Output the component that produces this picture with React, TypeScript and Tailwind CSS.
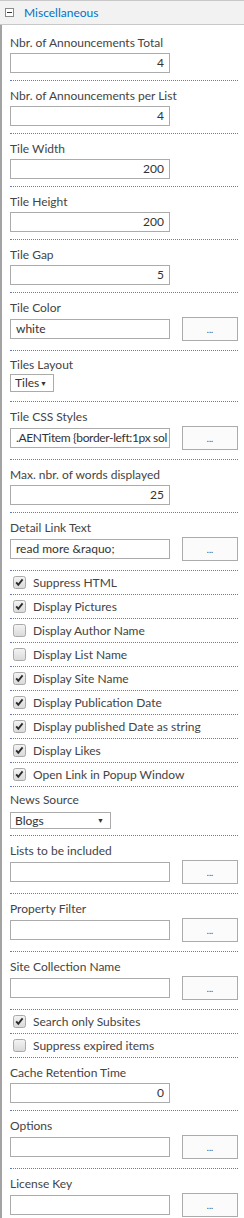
import React from 'react';

type Row =
  | { kind: 'text'; label: string; value?: string }
  | { kind: 'button'; label: string; value?: string; tight?: boolean }
  | { kind: 'select'; label: string; value: string; box: string; wrap: string }
  | { kind: 'check'; label: string; checked: boolean };

const ROWS: Row[] = [
  { kind: 'text', label: 'Nbr. of Announcements Total', value: '4' },
  { kind: 'text', label: 'Nbr. of Announcements per List', value: '4' },
  { kind: 'text', label: 'Tile Width', value: '200' },
  { kind: 'text', label: 'Tile Height', value: '200' },
  { kind: 'text', label: 'Tile Gap', value: '5' },
  { kind: 'button', label: 'Tile Color', value: 'white' },
  { kind: 'select', label: 'Tiles Layout', value: 'Tiles', box: 'mt-[2px] w-[44px] h-[18px]', wrap: 'pt-[6px] pb-[9px]' },
  { kind: 'button', label: 'Tile CSS Styles', value: '.AENTitem {border-left:1px sol', tight: true },
  { kind: 'text', label: 'Max. nbr. of words displayed', value: '25' },
  { kind: 'button', label: 'Detail Link Text', value: 'read more &raquo;' },
  { kind: 'check', label: 'Suppress HTML', checked: true },
  { kind: 'check', label: 'Display Pictures', checked: true },
  { kind: 'check', label: 'Display Author Name', checked: false },
  { kind: 'check', label: 'Display List Name', checked: false },
  { kind: 'check', label: 'Display Site Name', checked: true },
  { kind: 'check', label: 'Display Publication Date', checked: true },
  { kind: 'check', label: 'Display published Date as string', checked: true },
  { kind: 'check', label: 'Display Likes', checked: true },
  { kind: 'check', label: 'Open Link in Popup Window', checked: true },
  { kind: 'select', label: 'News Source', value: 'Blogs', box: 'mt-[5px] w-[101px] h-[17px]', wrap: 'pt-[5px] pb-[6px]' },
  { kind: 'button', label: 'Lists to be included' },
  { kind: 'button', label: 'Property Filter' },
  { kind: 'button', label: 'Site Collection Name' },
  { kind: 'check', label: 'Search only Subsites', checked: true },
  { kind: 'check', label: 'Suppress expired items', checked: false },
  { kind: 'text', label: 'Cache Retention Time', value: '0' },
  { kind: 'button', label: 'Options' },
  { kind: 'button', label: 'License Key' },
];

const Checkbox = ({ checked }: { checked: boolean }) => (
  <svg width="13" height="13" viewBox="0 0 13 13" className="shrink-0">
    <defs>
      <linearGradient id="cbg" x1="0" y1="0" x2="0" y2="1">
        <stop offset="0" stopColor="#f4f4f4" />
        <stop offset="1" stopColor="#d9d9d9" />
      </linearGradient>
    </defs>
    <rect x="0.5" y="0.5" width="12" height="12" rx="2" fill="url(#cbg)" stroke="#a9a9a9" />
    {checked && (
      <path d="M3.2 6.4 L5.3 8.8 L9.6 3.4" fill="none" stroke="#2b2b2b" strokeWidth="1.9" />
    )}
  </svg>
);

const Input = ({ value, right, tight }: { value?: string; right?: boolean; tight?: boolean }) => (
  <div
    className={`shrink-0 w-[160px] h-[20px] border border-[#ababab] bg-white px-[5px] flex items-center overflow-hidden whitespace-nowrap text-[#333] ${
      right ? 'justify-end' : 'justify-start'
    } ${tight ? 'tracking-[-0.35px]' : ''}`}
  >
    {value}
  </div>
);

const DotsButton = () => (
  <div className="shrink-0 ml-[12px] w-[56px] h-[24px] border border-[#ababab] bg-[#fbfbfb] flex items-end justify-center pb-[6px] text-[9px] leading-none text-[#444]">
    ...
  </div>
);

const FieldRow = ({ row }: { row: Row }) => {
  if (row.kind === 'check') {
    return (
      <div className="h-[23px] flex items-center pl-[3px] gap-[7px]">
        <Checkbox checked={row.checked} />
        <span>{row.label}</span>
      </div>
    );
  }
  if (row.kind === 'text') {
    return (
      <div className="pt-[7px] pb-[7px]">
        <div className="leading-[15px]">{row.label}</div>
        <div className="mt-[3px]">
          <Input value={row.value} right />
        </div>
      </div>
    );
  }
  if (row.kind === 'button') {
    return (
      <div className="pt-[7px] pb-[9px]">
        <div className="leading-[15px]">{row.label}</div>
        <div className="mt-[2px] flex items-center h-[24px]">
          <Input value={row.value} tight={row.tight} />
          <DotsButton />
        </div>
      </div>
    );
  }
  return (
    <div className={row.wrap}>
      <div className="leading-[15px]">{row.label}</div>
      <div
        className={`${row.box} border border-[#ababab] bg-white pl-[4px] pr-[6px] flex items-center justify-between text-[#333]`}
      >
        <span>{row.value}</span>
        <span className="text-[7px]">▼</span>
      </div>
    </div>
  );
};

export default function App() {
  return (
    <div className="w-[244px] bg-white text-[12px] text-[#444] font-['Lato','Liberation_Sans',sans-serif]">
      <div className="h-[25px] bg-[#f2f2f2] border-t border-b border-[#c8c8c8] flex items-center pl-[5px]">
        <div className="w-[9px] h-[9px] border border-[#8a8a8a] bg-white flex items-center justify-center">
          <div className="w-[5px] h-px bg-[#333]" />
        </div>
        <span className="ml-[10px] text-[#0072c6]">Miscellaneous</span>
      </div>
      <div className="border-l-2 border-[#a3a3a3] pl-[8px] pr-[6px] pt-[3px]">
        {ROWS.map((row, i) => (
          <div key={i} className={i > 0 ? 'border-t border-dotted border-[#5f7dbd]' : ''}>
            <FieldRow row={row} />
          </div>
        ))}
      </div>
    </div>
  );
}
